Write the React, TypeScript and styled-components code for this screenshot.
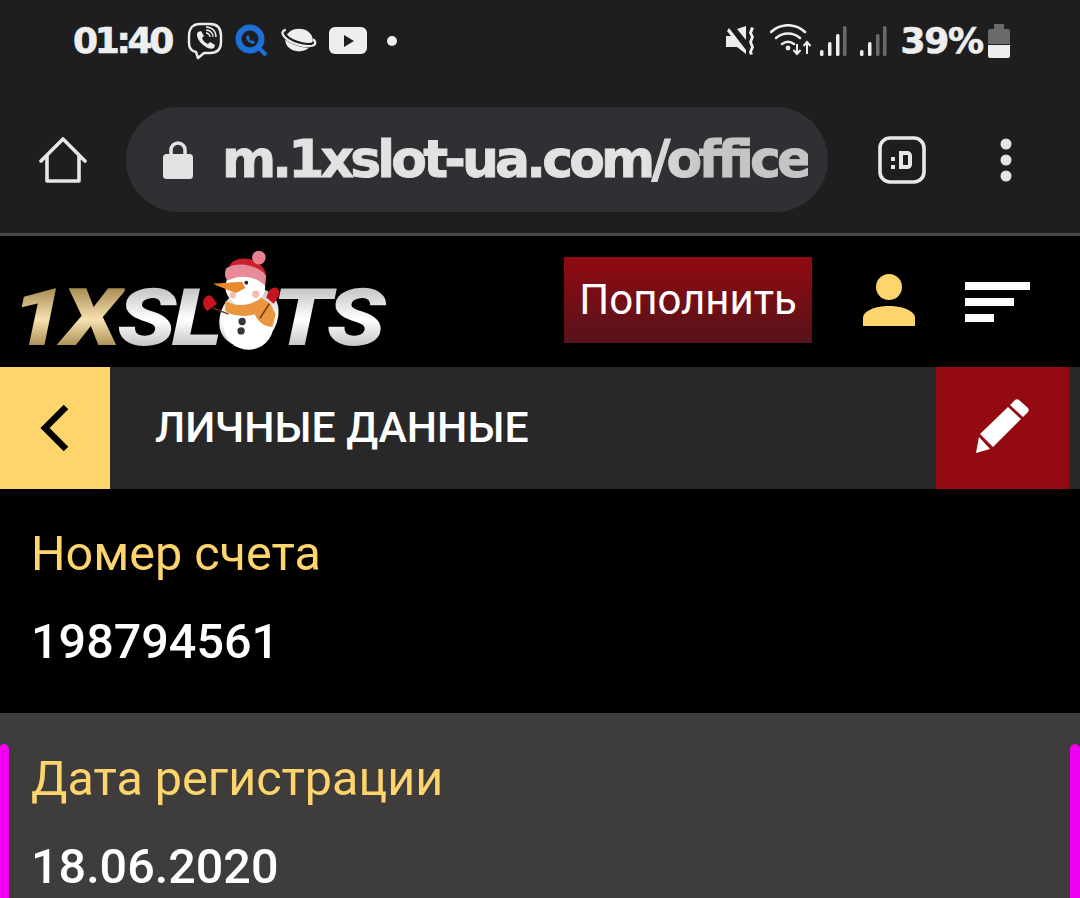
import React from 'react';
import styled, { createGlobalStyle } from 'styled-components';

const Global = createGlobalStyle`
  * { box-sizing: border-box; }
  html, body { margin: 0; padding: 0; background: #000; }
  body { height: 898px; overflow: hidden; font-family: Roboto, "Liberation Sans", sans-serif; }
`;
const Page = styled.div`width: 1080px; height: 898px; overflow: hidden; background: #000; display: flex; flex-direction: column;`;
const Chrome = styled.div`height: 233px; background: #1e1e1e; display: flex; flex-direction: column; flex: none;`;
const Divider = styled.div`height: 3px; background: #484848; flex: none;`;
const StatusBar = styled.div`height: 82px; padding: 0 70px 0 73px; display: flex; align-items: center; justify-content: space-between;`;
const Cluster = styled.div`display: flex; align-items: center; gap: ${p => p.$gap ?? 10}px;`;
const Clock = styled.span`font: 900 36px/1 "DejaVu Sans", Roboto, sans-serif; color: #eee; letter-spacing: -3.3px; -webkit-text-stroke: .7px #eee; margin-right: 4px;`;
const Battery = styled.span`font: 900 36px/1 "DejaVu Sans", Roboto, sans-serif; color: #eee; letter-spacing: -1.2px; -webkit-text-stroke: .7px #eee; margin: 0 -8px 0 0;`;
const NotificationDot = styled.span`display: flex; margin-left: 8px;`;
const WifiSlot = styled.span`display: flex; margin-right: -7px;`;
const BrowserBar = styled.div`flex: 1; display: flex; align-items: center; padding: 4px 0 0 39px;`;
const HomeSlot = styled.div`width: 87px; display: flex; flex: none;`;
const UrlPill = styled.div`width: 702px; height: 105px; border-radius: 53px; background: #2e3033; display: flex; align-items: center; padding: 0 20px 0 37px; flex: none; overflow: hidden;`;
const LockSlot = styled.span`display: flex; flex: none;`;
const UrlText = styled.span`
  flex: none; margin-left: 29px; font: 700 52px/1.2 "DejaVu Sans", sans-serif; white-space: nowrap;
  letter-spacing: -3.85px; display: block; color: #e2e2e2; -webkit-text-stroke: .9px #e2e2e2;
  -webkit-mask-image: linear-gradient(90deg, #000 0 72%, rgba(0,0,0,.84) 82%, rgba(0,0,0,.84) 100%);
  mask-image: linear-gradient(90deg, #000 0 72%, rgba(0,0,0,.84) 82%, rgba(0,0,0,.84) 100%);
`;
const ChromeIcons = styled.div`display: flex; align-items: center; margin-left: 50px; gap: 74px;`;
const Header = styled.header`height: 131px; flex: none; position: relative; display: flex; align-items: flex-start; padding-top: 21px; background: #000;`;
const Logo = styled.div`position: relative; margin-left: 20px; width: 366px; height: 90px; flex: none;`;
const LogoText = styled.div`display: flex; padding-top: 21px; margin-left: -9px; white-space: nowrap; font: italic 900 80px/1 Roboto, sans-serif; letter-spacing: -3.4px; transform: scaleX(1.21); transform-origin: left top;`;
const Gold = styled.span`background: linear-gradient(180deg, #a88a50 12%, #f6e2b0 52%, #a5874d 88%); -webkit-background-clip: text; background-clip: text; color: transparent; padding-right: 6px; margin-right: -6px;`;
const Silver = styled.span`background: linear-gradient(180deg, #c8c8c8 15%, #fff 52%, #c0c0c0 88%); -webkit-background-clip: text; background-clip: text; color: transparent; padding-right: 8px;`;
const Snowman = styled.svg`position: absolute; left: 178px; top: -12px;`;
const DepositButton = styled.button`margin-left: 178px; width: 248px; height: 86px; border: 0; background: linear-gradient(180deg, #920a10, #56131a); color: #fff; font: 400 42px/1 Roboto, sans-serif; padding: 0; flex: none;`;
const HeaderIcons = styled.div`display: flex; margin-left: 51px; gap: 50px; margin-top: 17px; align-items: flex-start;`;
const Menu = styled.div`display: flex; flex-direction: column; gap: 8px; margin-top: 8px;`;
const MenuBar = styled.i`display: block; height: 8px; background: #fff; width: ${p => p.$w}px;`;
const TitleBar = styled.div`height: 122px; flex: none; background: #282828; display: flex; align-items: stretch; padding-right: 11px;`;
const BackButton = styled.div`width: 110px; background: #fdd56c; display: flex; align-items: center; justify-content: center; flex: none;`;
const Title = styled.h1`flex: 1; margin: 0 0 0 45px; color: #fff; font: 500 42.7px/120px Roboto, sans-serif;`;
const EditButton = styled.div`width: 133px; background: #930a10; display: flex; align-items: center; justify-content: center; padding-bottom: 6px;`;
const Row = styled.section`height: 224px; flex: none; position: relative; padding: ${p => p.$alt ? 40 : 39}px 31px 0; background: ${p => p.$alt ? '#3f3c3c' : '#000'};`;
const Label = styled.div`color: #fdd56c; font: 400 48.5px/52px Roboto, sans-serif;`;
const Value = styled.div`color: #fff; font: 500 48.5px/52px Roboto, sans-serif; margin-top: 36px;`;
const Edge = styled.i`position: absolute; top: 31px; bottom: -20px; width: 10px; background: #f000f0; border-radius: 5px 5px 0 0; ${p => p.$right ? 'right: 0;' : 'left: -1px;'}`;

const Viber = () => <svg width="36" height="38" viewBox="0 0 36 38" fill="none" stroke="#eee"><path strokeWidth="2.4" d="M9 30C4 29 2 26 2 21v-7C2 6 6 2 13 2h10c7 0 11 4 11 12v6c0 8-4 11-11 11h-6l-6 5z" strokeLinejoin="round"/><path fill="#eee" stroke="none" d="M11 10l3-1 3 5-2 2c1 3 3 5 6 6l2-2 5 3-1 3c-2 1-5 1-8-1-5-3-8-7-9-11 0-2 0-3 1-4z"/><path strokeWidth="1.4" d="M19 8c4 0 7 3 7 7M19 11c2 0 4 2 4 4M19 5c6 0 10 4 10 10"/></svg>;
const Quick = () => <svg width="34" height="34" viewBox="0 0 34 34" fill="none"><circle cx="15" cy="15" r="11.5" stroke="#1f6fd8" strokeWidth="6"/><path d="M24 24l7 7" stroke="#1f6fd8" strokeWidth="4"/><path d="M11 13c1 4 3 6 7 7l2-2-3-2-1 1-2-2 1-1-2-3z" fill="#1f6fd8"/></svg>;
const Planet = () => <svg width="36" height="30" viewBox="0 0 38 30"><ellipse cx="19" cy="14" rx="14.5" ry="12" fill="#eee"/><path d="M2 6c3 8 22 17 34 12" fill="none" stroke="#1e1e1e" strokeWidth="5"/><path d="M5 3C0 5 1 8 4 11c6 6 20 11 29 9 4-1 4-4 1-7" fill="none" stroke="#eee" strokeWidth="2.4"/></svg>;
const YouTube = () => <svg width="38" height="28" viewBox="0 0 38 28"><rect width="38" height="27" rx="6" fill="#eee"/><path d="M15 8l10 6-10 6z" fill="#1e1e1e"/></svg>;
const Mute = () => <svg width="32" height="32" viewBox="0 0 32 32" fill="#eee"><path d="M1 11h5L2 6l2-3 17 22v4L12 22H1zM12 4l9-3v14z" /><path d="M26 2l3 1-2 5 2 4-2 5 2 5-2 5 1 2-3 1-1-3 2-5-2-5 2-5-2-4z"/></svg>;
const Wifi = () => <svg width="44" height="34" viewBox="0 0 44 34" fill="none" stroke="#eee"><g strokeWidth="2.6" strokeLinecap="round"><path d="M1 8c10-9 24-9 34 0"/><path d="M6 14c7-6 17-6 24 0"/><path d="M12 20c4-3 8-3 12 0"/></g><circle cx="18" cy="24" r="2.4" fill="#eee" stroke="none"/><path strokeWidth="2" d="M27 20v10m-3.500-4l3.500 4 3.500-4M37 30V18m-3.500 4l3.500-4 3.500 4"/></svg>;
const Signal = ({ dim }: { dim: number }) => <svg width="27" height="31" viewBox="0 0 27 31">{[[0, 6], [8, 14], [16, 22], [23, 30]].map(([x, h], i) => <rect key={x} x={x} y={30 - h} width="3.500" height={h} rx="1.500" fill={i >= 4 - dim ? '#6a6a6a' : '#eee'} />)}</svg>;
const Cell = () => <svg width="22" height="34" viewBox="0 0 22 34"><path d="M6 0h10v5h4a2 2 0 012 2v13H0V7a2 2 0 012-2h4z" fill="#6a6a6a"/><path d="M0 21h22v11a2 2 0 01-2 2H2a2 2 0 01-2-2z" fill="#eee"/></svg>;
const Dot = () => <svg width="10" height="10"><circle cx="5" cy="5" r="5" fill="#eee"/></svg>;
const Home = () => <svg width="48" height="48" viewBox="0 0 48 48" fill="none" stroke="#e6e6e6" strokeWidth="3.600" strokeLinejoin="round" strokeLinecap="round"><path d="M2 25L24 3l22 22M8 20v25h32V20"/></svg>;
const Lock = () => <svg width="30" height="38" viewBox="0 0 30 38"><path d="M8 14V9a7 7 0 0114 0v5" fill="none" stroke="#e2e2e2" strokeWidth="3.500"/><rect y="13" width="30" height="25" rx="3.500" fill="#e2e2e2"/></svg>;
const Tab = () => <svg width="48" height="48" viewBox="0 0 48 48"><rect x="2" y="2" width="44" height="44" rx="10" fill="none" stroke="#e8e8e8" strokeWidth="3.600"/><path fill="#e8e8e8" d="M13 21h4v4h-4zM13 29h4v4h-4zM21 15h8c3 0 5 2 5 5v8c0 3-2 5-5 5h-8zm4 4v10h4c1 0 1 0 1-1v-8c0-1 0-1-1-1z"/></svg>;
const Dots = () => <svg width="12" height="44" viewBox="0 0 12 44" fill="#e4e4e4"><circle cx="6" cy="6" r="5.500"/><circle cx="6" cy="22" r="5.500"/><circle cx="6" cy="38" r="5.500"/></svg>;
const Person = () => <svg width="52" height="52" viewBox="0 0 52 52" fill="#fdd56c"><circle cx="26" cy="13" r="13"/><path d="M0 52V44c0-7 12-12 26-12s26 5 26 12v8z"/></svg>;
const Chevron = () => <svg width="30" height="48" viewBox="0 0 30 48" fill="none"><path d="M26 3L5 24l21 21" stroke="#000" strokeWidth="6.500"/></svg>;
const Pencil = () => <svg width="54" height="56" viewBox="0 0 54 56" fill="#fff"><path d="M39 3c1-1 3-1 4 0l9 8c1 1 1 3 0 4l-5 5-13-12z"/><path d="M32 10l13 12-28 28L4 37z"/><path d="M3 40l11 12-14 4z"/></svg>;

const SnowmanArt = () => (
  <Snowman width="105" height="110" viewBox="0 0 100 105">
    <circle cx="48" cy="76" r="24" fill="#fff" />
    <ellipse cx="45" cy="40" rx="19" ry="18" fill="#fff" />
    <path d="M29 24c0-15 30-16 36 4-12-4-24-5-36-4z" fill="#c9202c" />
    <path d="M27 22c14-7 30-2 38 7l-1 10C54 29 40 28 28 34c-3-4-3-8-1-12z" fill="#e88a98" />
    <circle cx="58" cy="12" r="6.500" fill="#e8808f" />
    <path d="M14 37l28-2 3 6-9 5z" fill="#e98a2c" />
    <circle cx="33" cy="48" r="3" fill="#f6b9b4" /><circle cx="55" cy="47" r="3.500" fill="#f6b9b4" />
    <circle cx="46" cy="36" r="1.800" fill="#222" />
    <path d="M26 53c10 7 26 5 34-3l9 6 5 10-3 12c-8 0-14-5-17-12-9 3-21 2-28-3z" fill="#e9963e" />
    <path d="M5 53c2-5 6-6 9-3l4 6-9 7c-3-2-5-6-4-10zM68 43c3-2 6-4 8-1 3 2 1 8-4 14l-7-6z" fill="#c8141e" />
    <path d="M14 60l15 6M68 56l-9 14" stroke="#6b3b18" strokeWidth="1.500" />
    <circle cx="42" cy="73" r="3.500" fill="#33363c" /><circle cx="41" cy="82" r="3.500" fill="#33363c" />
  </Snowman>
);

export default function App() {
  return (
    <Page>
      <Global />
      <Chrome>
        <StatusBar>
          <Cluster $gap={12}>
            <Clock>01:40</Clock>
            <Viber /><Quick /><Planet /><YouTube />
            <NotificationDot><Dot /></NotificationDot>
          </Cluster>
          <Cluster $gap={13}>
            <Mute /><WifiSlot><Wifi /></WifiSlot><Signal dim={1} /><Signal dim={2} />
            <Battery>39%</Battery>
            <Cell />
          </Cluster>
        </StatusBar>
        <BrowserBar>
          <HomeSlot><Home /></HomeSlot>
          <UrlPill><LockSlot><Lock /></LockSlot><UrlText>m.1xslot-ua.com/office</UrlText></UrlPill>
          <ChromeIcons><Tab /><Dots /></ChromeIcons>
        </BrowserBar>
      </Chrome>
      <Divider />
      <Header>
        <Logo>
          <LogoText><Gold>1X</Gold><Silver>SLOTS</Silver></LogoText>
          <SnowmanArt />
        </Logo>
        <DepositButton>Пополнить</DepositButton>
        <HeaderIcons>
          <Person />
          <Menu><MenuBar $w={65} /><MenuBar $w={49} /><MenuBar $w={29} /></Menu>
        </HeaderIcons>
      </Header>
      <TitleBar>
        <BackButton><Chevron /></BackButton>
        <Title>ЛИЧНЫЕ ДАННЫЕ</Title>
        <EditButton><Pencil /></EditButton>
      </TitleBar>
      <Row><Label>Номер счета</Label><Value>198794561</Value></Row>
      <Row $alt><Edge /><Edge $right /><Label>Дата регистрации</Label><Value>18.06.2020</Value></Row>
    </Page>
  );
}
